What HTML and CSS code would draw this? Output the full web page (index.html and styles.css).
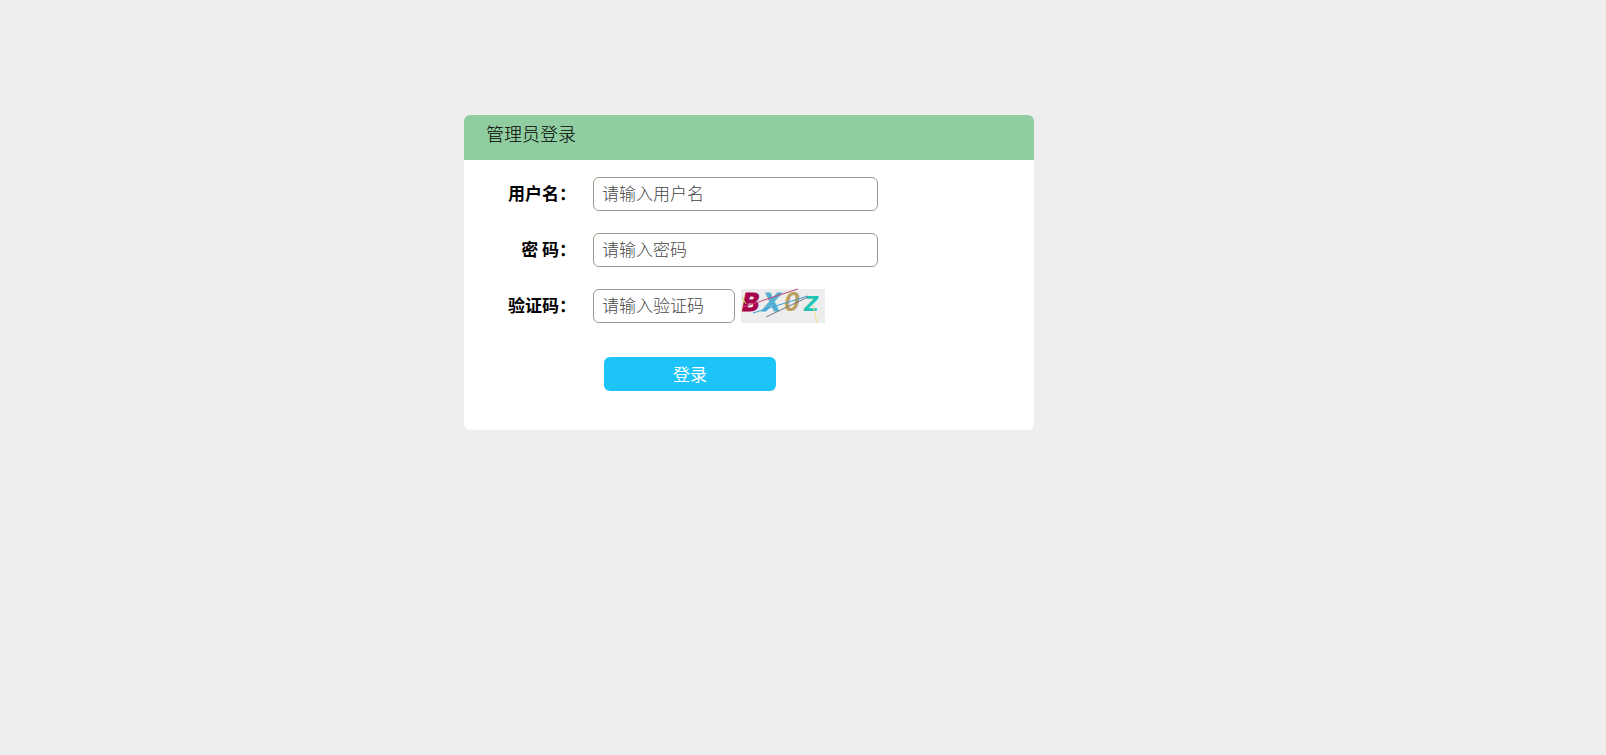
FILE: index.html
```
<!DOCTYPE html>
<html lang="zh-CN">
<head>
    <meta charset="UTF-8">
    <title>管理员登录</title>
    <link rel="stylesheet" href="styles.css">
</head>
<body>
    <div class="login-box">
        <div class="login-title">管理员登录</div>
        <form class="login-form">
            <div class="form-row">
                <label for="username">用户名：</label>
                <input type="text" id="username" class="form-input" placeholder="请输入用户名">
            </div>
            <div class="form-row">
                <label for="password">密 码：</label>
                <input type="password" id="password" class="form-input" placeholder="请输入密码">
            </div>
            <div class="form-row">
                <label for="code">验证码：</label>
                <input type="text" id="code" class="form-input code-input" placeholder="请输入验证码">
                <!-- 验证码 -->
                <svg class="code-img" width="84" height="34" viewBox="0 0 84 34">
                    <rect width="84" height="34" fill="#ededed"/>
                    <text x="1" y="22" fill="#a8004c" stroke="#a8004c">B</text>
                    <text x="22" y="22" fill="#55b0d2" stroke="#55b0d2">X</text>
                    <text x="43" y="22" fill="#bb9f60" class="code-digit">0</text>
                    <text x="62" y="22" fill="#1cc4b2">z</text>
                    <path d="M1 8l4 7" stroke="#c8e65a"/>
                    <path d="M2 18L57 0" stroke="#c4466f"/>
                    <path d="M12 24L67 7" stroke="#3c9fdc"/>
                    <path d="M25 28L67 8" stroke="#77788c"/>
                    <path d="M72 16l4 18" stroke="#f5dc8c"/>
                </svg>
            </div>
            <button type="submit" class="login-btn">登录</button>
        </form>
    </div>
</body>
</html>
```

FILE: styles.css
```
* {
    box-sizing: border-box;
}
body {
    margin: 0;
    padding: 115px 108px 0 0;
    background-color: #eee;
    font-family: "Noto Sans CJK SC", sans-serif;
    font-size: 17px;
}
.login-box {
    max-width: 570px;
    margin: 0 auto;
    background-color: #fff;
    border-radius: 6px;
    overflow: hidden;
}
.login-title {
    height: 45px;
    padding-left: 22px;
    background-color: #90cda1;
    color: #000;
    font-size: 18px;
    font-weight: 300;
    line-height: 36px;
}
.login-form {
    padding: 17px 0 39px;
}
.form-row {
    display: flex;
    align-items: flex-start;
    margin-bottom: 22px;
}
.form-row label {
    width: 20%;
    margin-right: 15px;
    padding-right: 2px;
    color: #000;
    font-weight: bold;
    line-height: 32px;
    text-align: right;
}
.form-input {
    width: 50%;
    height: 34px;
    padding: 0 8px 4px;
    border: 1px solid #99998c;
    border-radius: 6px;
    background-color: #fff;
    font-family: inherit;
    font-size: 17px;
    font-weight: 300;
}
.form-input::placeholder {
    color: #444;
}
.code-input {
    width: 142px;
}
.code-img {
    margin-left: 6px;
    overflow: visible;
    font-family: "Liberation Mono", monospace;
    font-size: 28px;
    font-style: italic;
    font-weight: bold;
}
.code-digit {
    font-family: "Liberation Sans", sans-serif;
}
.login-btn {
    display: block;
    width: 172px;
    height: 34px;
    margin: 34px 0 0 140px;
    padding: 0;
    border: none;
    border-radius: 6px;
    background-color: #1cc4fa;
    color: #fff;
    font-family: inherit;
    font-size: 17px;
    line-height: 34px;
    cursor: pointer;
}
```
